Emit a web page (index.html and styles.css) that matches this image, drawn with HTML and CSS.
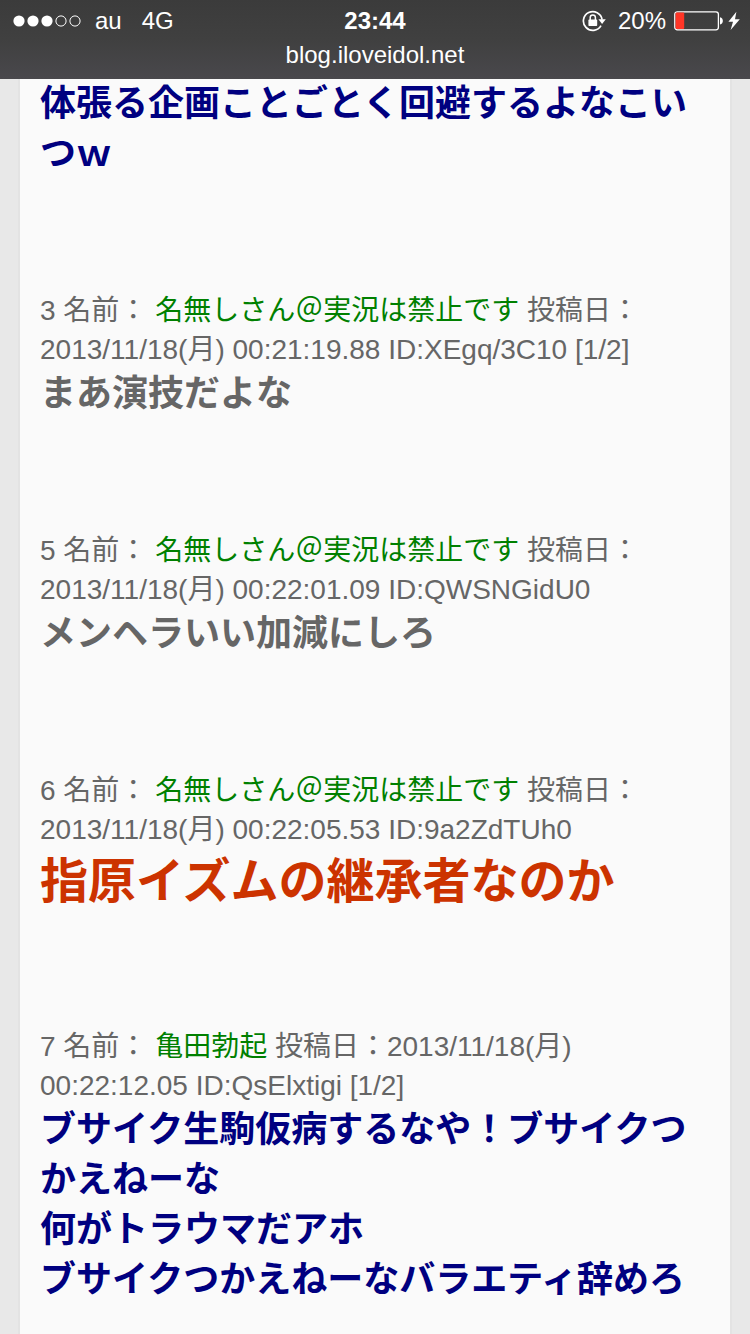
FILE: index.html
```html
<!DOCTYPE html>
<html lang="ja">

<head>
    <meta charset="UTF-8">
    <meta name="viewport" content="width=device-width, initial-scale=1.0">
    <title>blog.iloveidol.net</title>
    <link rel="stylesheet" href="styles.css">
</head>

<body>
    <header class="top-bar">
        <div class="status">
            <div class="status-left">
                <svg class="signal" width="68" height="12" viewBox="0 0 68 12" aria-hidden="true">
                    <g fill="#fff">
                        <circle cx="6" cy="6" r="5.6" />
                        <circle cx="20" cy="6" r="5.6" />
                        <circle cx="34" cy="6" r="5.6" />
                    </g>
                    <g fill="none" stroke="#fff">
                        <circle cx="48" cy="6" r="5.1" />
                        <circle cx="62" cy="6" r="5.1" />
                    </g>
                </svg>
                <span>au</span>
                <span class="network">4G</span>
            </div>
            <div class="clock">23:44</div>
            <div class="status-right">
                <svg class="lock" width="24" height="22" viewBox="0 0 24 22" aria-hidden="true">
                    <path d="M19 15.6A9.4 9.4 0 1 1 20.1 9.6" fill="none" stroke="#fff" stroke-width="1.7" />
                    <path d="M16.4 9.2h7.4l-3.7 4.8z" fill="#fff" />
                    <rect x="6.4" y="9.6" width="8.8" height="6.4" rx="0.8" fill="#fff" />
                    <path d="M8.2 10V7.6a2.6 2.6 0 0 1 5.2 0V10" fill="none" stroke="#fff" stroke-width="1.5" />
                </svg>
                <span>20%</span>
                <svg class="battery" width="50" height="20" viewBox="0 0 50 20" aria-hidden="true">
                    <rect x="0.8" y="0.8" width="43.6" height="18" rx="2.5" fill="none" stroke="#fff" stroke-width="1.3" />
                    <rect x="1.6" y="1.6" width="8.6" height="16.4" rx="1" fill="#ff3526" />
                    <path d="M46 6.2c3.8.6 3.8 6.6 0 7.2z" fill="#fff" />
                </svg>
                <svg class="bolt" width="12" height="20" viewBox="0 0 12 20" aria-hidden="true">
                    <path d="M8.4 0.8L0.4 10.8H5L2.6 19L11.8 8.2H7z" fill="#fff" />
                </svg>
            </div>
        </div>
        <div class="address">blog.iloveidol.net</div>
    </header>

    <main class="thread">
        <article class="post">
            <p class="message navy">体張る企画ことごとく回避するよなこいつｗ</p>
        </article>

        <article class="post">
            <p class="meta">3 名前： <span class="name">名無しさん＠実況は禁止です</span> 投稿日：2013/11/18(月) 00:21:19.88 ID:XEgq/3C10 [1/2]</p>
            <p class="message">まあ演技だよな</p>
        </article>

        <article class="post">
            <p class="meta">5 名前： <span class="name">名無しさん＠実況は禁止です</span> 投稿日：2013/11/18(月) 00:22:01.09 ID:QWSNGidU0</p>
            <p class="message">メンヘラいい加減にしろ</p>
        </article>

        <article class="post">
            <p class="meta">6 名前： <span class="name">名無しさん＠実況は禁止です</span> 投稿日：2013/11/18(月) 00:22:05.53 ID:9a2ZdTUh0</p>
            <p class="message large">指原イズムの継承者なのか</p>
        </article>

        <article class="post">
            <p class="meta">7 名前： <span class="name">亀田勃起</span> 投稿日：2013/11/18(月) 00:22:12.05 ID:QsElxtigi [1/2]</p>
            <p class="message navy">ブサイク生駒仮病するなや！ブサイクつかえねーな<br>何がトラウマだアホ<br>ブサイクつかえねーなバラエティ辞めろ</p>
        </article>
    </main>
</body>

</html>
```
FILE: styles.css
```css
* {
    box-sizing: border-box;
}

body {
    display: flex;
    flex-direction: column;
    min-height: 100vh;
    margin: 0;
    background-color: #e8e8e8;
    color: #666;
    font-family: "Liberation Sans", "Noto Sans CJK JP", sans-serif;
}

/* Status bar */
.top-bar {
    padding: 5px 10px 6px;
    background: linear-gradient(#3b3b3b, #404040 50%, #49484c);
    color: #fff;
    font-size: 24px;
}

.status {
    display: grid;
    grid-template-columns: 1fr auto 1fr;
    align-items: center;
    line-height: 32px;
}

.status-left,
.status-right {
    display: flex;
    align-items: center;
}

.status-left {
    padding-left: 3px;
}

.status-right {
    justify-content: flex-end;
}

.signal {
    margin-right: 14px;
}

.network {
    margin-left: 20px;
}

.clock {
    font-weight: bold;
}

.lock {
    margin-right: 12px;
}

.battery {
    margin-left: 8px;
    margin-right: 4px;
}

.address {
    line-height: 36px;
    text-align: center;
}

/* Thread */
.thread {
    flex: 1;
    margin: 0 20px;
    padding: 0 20px;
    background-color: #fafafa;
    box-shadow: 0 0 0 2px #e3e3e3;
    clip-path: inset(0 -2px);
}

.post {
    margin-bottom: 112px;
}

.post:last-child {
    margin-bottom: 0;
}

.meta {
    margin: 0;
    font-size: 28px;
    line-height: 39px;
}

.name {
    color: #008000;
}

.message {
    margin: 0;
    font-size: 36px;
    font-weight: bold;
    line-height: 50px;
}

.navy {
    color: #000080;
}

.large {
    color: #cc3300;
    font-size: 48px;
    line-height: 66px;
}
```
